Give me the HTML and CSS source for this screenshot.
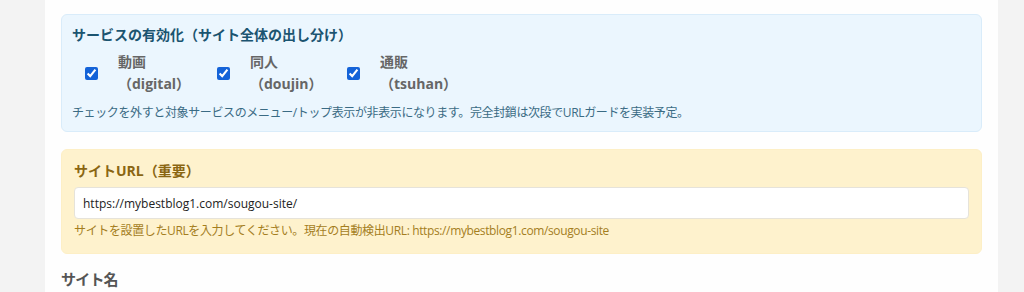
FILE: index.html
```html
<!DOCTYPE html>
<html lang="ja">
<head>
<meta charset="utf-8">
<link rel="stylesheet" href="styles.css">
</head>
<body>
<div class="panel">
  <section class="box box-info">
    <h3 class="box-title">サービスの有効化（サイト全体の出し分け）</h3>
    <div class="svc-row">
      <label class="svc"><input type="checkbox" checked><span class="svc-name">動画<br>（digital）</span></label>
      <label class="svc"><input type="checkbox" checked><span class="svc-name">同人<br>（doujin）</span></label>
      <label class="svc"><input type="checkbox" checked><span class="svc-name">通販<br>（tsuhan）</span></label>
    </div>
    <p class="box-desc">チェックを外すと対象サービスのメニュー/トップ表示が非表示になります。完全封鎖は次段でURLガードを実装予定。</p>
  </section>

  <section class="box box-warn">
    <h3 class="box-title">サイトURL（重要）</h3>
    <input class="text-input" type="text" value="https://mybestblog1.com/sougou-site/">
    <p class="box-desc">サイトを設置したURLを入力してください。現在の自動検出URL: https://mybestblog1.com/sougou-site</p>
  </section>

  <h3 class="field-title">サイト名</h3>
</div>
</body>
</html>
```

FILE: styles.css
```css
html, body {
  margin: 0;
  padding: 0;
}
body {
  background: #f3f3f3;
  font-family: "Open Sans", "Noto Sans CJK JP", sans-serif;
  height: 292px;
  overflow: hidden;
}
.panel {
  margin-left: 45px;
  width: 953px;
  min-height: 292px;
  box-sizing: border-box;
  background: #fefefe;
  padding: 14px 16px 0 16px;
}
.box {
  border-radius: 6px;
  box-sizing: border-box;
}
.box-info {
  background: #ebf6fe;
  border: 1px solid #d9ecfa;
  padding: 9px 10px 9px 10px;
}
.box-warn {
  margin-top: 17px;
  background: #fef2cd;
  border: 1px solid #fdefc6;
  padding: 10px 12px 13px 12px;
}
.box-title {
  margin: 0;
  font-size: 14px;
  line-height: 21px;
  font-weight: 700;
}
.box-info .box-title {
  color: #1b5470;
}
.box-warn .box-title {
  color: #8a6612;
}
.svc-row {
  display: grid;
  grid-template-columns: 132px 130px 140px;
  padding-left: 13px;
  margin-top: 6px;
}
.svc {
  display: flex;
  align-items: center;
  gap: 20px;
}
.svc input {
  margin: 0;
  width: 13px;
  height: 13px;
  accent-color: #1463d8;
}
.svc-name {
  font-size: 14px;
  line-height: 22px;
  font-weight: 700;
  color: #666666;
}
.box-desc {
  margin: 9px 0 0 0;
  font-size: 12px;
  line-height: 18px;
}
.box-info .box-desc {
  color: #3a6b84;
  letter-spacing: -0.38px;
}
.box-warn .box-desc {
  margin-top: 3px;
  color: #a47e1e;
  letter-spacing: -0.37px;
}
.text-input {
  display: block;
  margin-top: 6px;
  width: 100%;
  height: 32px;
  box-sizing: border-box;
  border: 1px solid #e6e3da;
  border-radius: 4px;
  background: #ffffff;
  padding: 0 8px;
  font-family: "Open Sans", "Noto Sans CJK JP", sans-serif;
  font-size: 12px;
  color: #222222;
  outline: none;
}
.field-title {
  margin: 14px 0 0 0;
  font-size: 15px;
  line-height: 22px;
  font-weight: 700;
  color: #555555;
  letter-spacing: -0.8px;
}
```
